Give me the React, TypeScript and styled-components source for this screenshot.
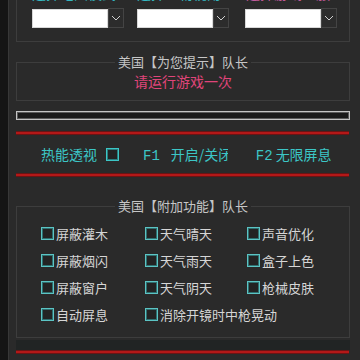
import React from "react";
import styled, { createGlobalStyle } from "styled-components";

const GlobalStyle = createGlobalStyle`
  html, body { margin: 0; padding: 0; background: #2a2a2a; overflow: hidden; }
  body { font-family: "Noto Sans CJK SC", "Noto Sans", sans-serif; }
  * { box-sizing: border-box; }
`;

const Page = styled.div`
  display: flex;
  width: 360px;
  height: 360px;
  overflow: hidden;
  background: #2a2a2a;
`;

const LeftStrip = styled.div`
  flex: none;
  width: 9px;
  background: #151515;
  border-right: 1px solid #383838;
`;

const Main = styled.div`
  flex: 1;
  display: flex;
  flex-direction: column;
  padding: 0 10px 0 7px;
  min-width: 0;
`;

const TopPanel = styled.div`
  margin-top: -18px;
  border: 1px solid #3d3d3d;
  padding: 0 0 13px 15px;
`;

const LabelRow = styled.div`
  display: flex;
  height: 20px;
  line-height: 20px;
  font-size: 14px;
`;

const TopLabel = styled.span<{ $color: string; $width: number }>`
  width: ${(p) => p.$width}px;
  color: ${(p) => p.$color};
  white-space: nowrap;
  overflow: hidden;
`;

const DropRow = styled.div`
  display: flex;
  margin-top: 6px;
`;

const Drop = styled.div<{ $gap: number }>`
  display: flex;
  margin-right: ${(p) => p.$gap}px;
`;

const DropField = styled.div`
  width: 76px;
  height: 19px;
  background: #ffffff;
  border: 1px solid #d8d8d8;
`;

const DropButton = styled.div`
  width: 16px;
  height: 20px;
  margin-top: -1px;
  background: #2c2c2c;
  border: 1px solid #444444;
  display: flex;
  align-items: center;
  justify-content: center;
`;

const Group = styled.fieldset<{ $top: number }>`
  margin: ${(p) => p.$top}px 0 0 0;
  padding: 0;
  border: 1px solid #3d3d3d;
  min-width: 0;
`;

const Legend = styled.legend`
  margin: 0 auto;
  padding: 0 3px;
  height: 16px;
  font-size: 13px;
  line-height: 16px;
  color: #c6c6c6;
`;

const Hint = styled.div`
  margin-top: 2px;
  padding-bottom: 10px;
  text-align: center;
  font-size: 14px;
  line-height: 18px;
  color: #e0457a;
`;

const Progress = styled.div`
  margin-top: 10px;
  height: 9px;
  border: 1px solid #c4c4c4;
  background: #1a1a1a;
  box-shadow: inset 0 0 0 1px #5a5a5a;
`;

const RedLine = styled.div<{ $top: number }>`
  margin-top: ${(p) => p.$top}px;
  height: 4px;
  background: #b41818;
  border-top: 1px solid #6a1414;
  border-bottom: 1px solid #6a1414;
  margin-right: 1px;
`;

const HotRow = styled.div`
  height: 38px;
  display: flex;
  align-items: center;
  padding-left: 25px;
  color: #3cc6c6;
  font-size: 14px;
  line-height: 18px;
  white-space: nowrap;
`;

const HotText = styled.span<{ $width?: number; $ml?: number }>`
  display: block;
  height: 18px;
  margin-left: ${(p) => p.$ml ?? 0}px;
  ${(p) => (p.$width ? `width: ${p.$width}px; overflow: hidden;` : "")}
`;

const KeyText = styled.span<{ $ml: number }>`
  display: block;
  height: 18px;
  line-height: 23px;
  margin-left: ${(p) => p.$ml}px;
  font-family: "Liberation Mono", "DejaVu Sans Mono", monospace;
  font-size: 14px;
`;

const Box = styled.span<{ $bright?: boolean; $ml?: number }>`
  display: block;
  flex: none;
  width: 13px;
  height: 13px;
  margin-left: ${(p) => p.$ml ?? 0}px;
  border: 1px solid ${(p) => (p.$bright ? "#3cc6c6" : "#5cc4c4")};
  box-shadow: inset 0 0 0 1px ${(p) => (p.$bright ? "#2a7d7d" : "#2f6f6f")};
  background: #232323;
`;

const Grid = styled.div`
  display: grid;
  grid-template-columns: 104px 102px 1fr;
  grid-auto-rows: 27px;
  padding: 6px 0 9px 24px;
`;

const Item = styled.label<{ $span?: number }>`
  display: flex;
  align-items: center;
  gap: 2px;
  font-size: 13px;
  line-height: 17px;
  color: #d6d6d6;
  white-space: nowrap;
  ${(p) => (p.$span ? `grid-column: span ${p.$span};` : "")}
`;

const Band = styled.div`
  margin-top: 2px;
  height: 10px;
  background: #212424;
`;

const Chevron = () => (
  <svg width="10" height="6" viewBox="0 0 10 6">
    <polyline points="1,1 5,5 9,1" fill="none" stroke="#d0d0d0" strokeWidth="1" />
  </svg>
);

const drops = [13, 16, 0];

const items: { t: string; span?: number }[] = [
  { t: "屏蔽灌木" },
  { t: "天气晴天" },
  { t: "声音优化" },
  { t: "屏蔽烟闪" },
  { t: "天气雨天" },
  { t: "盒子上色" },
  { t: "屏蔽窗户" },
  { t: "天气阴天" },
  { t: "枪械皮肤" },
  { t: "自动屏息" },
  { t: "消除开镜时中枪晃动", span: 2 },
];

export default function App() {
  return (
    <>
      <GlobalStyle />
      <Page>
        <LeftStrip />
        <Main>
          <TopPanel>
            <LabelRow>
              <TopLabel $color="#34b8c0" $width={105}>选择地图模式</TopLabel>
              <TopLabel $color="#34b8c0" $width={109}>选择人物视角</TopLabel>
              <TopLabel $color="#c05a9a" $width={100}>选择游戏区服</TopLabel>
            </LabelRow>
            <DropRow>
              {drops.map((g, i) => (
                <Drop key={i} $gap={g}>
                  <DropField />
                  <DropButton>
                    <Chevron />
                  </DropButton>
                </Drop>
              ))}
            </DropRow>
          </TopPanel>

          <Group $top={12}>
            <Legend>美国【为您提示】队长</Legend>
            <Hint>请运行游戏一次</Hint>
          </Group>

          <Progress />
          <RedLine $top={11} />

          <HotRow>
            <HotText>热能透视</HotText>
            <Box $bright $ml={9} />
            <KeyText $ml={24}>F1</KeyText>
            <HotText $ml={11} $width={57}>开启/关闭</HotText>
            <KeyText $ml={28}>F2</KeyText>
            <HotText $ml={3}>无限屏息</HotText>
          </HotRow>

          <RedLine $top={0} />

          <Group $top={21}>
            <Legend>美国【附加功能】队长</Legend>
            <Grid>
              {items.map((it) => (
                <Item key={it.t} $span={it.span}>
                  <Box />
                  {it.t}
                </Item>
              ))}
            </Grid>
          </Group>

          <Band />
          <RedLine $top={0} />
        </Main>
      </Page>
    </>
  );
}
